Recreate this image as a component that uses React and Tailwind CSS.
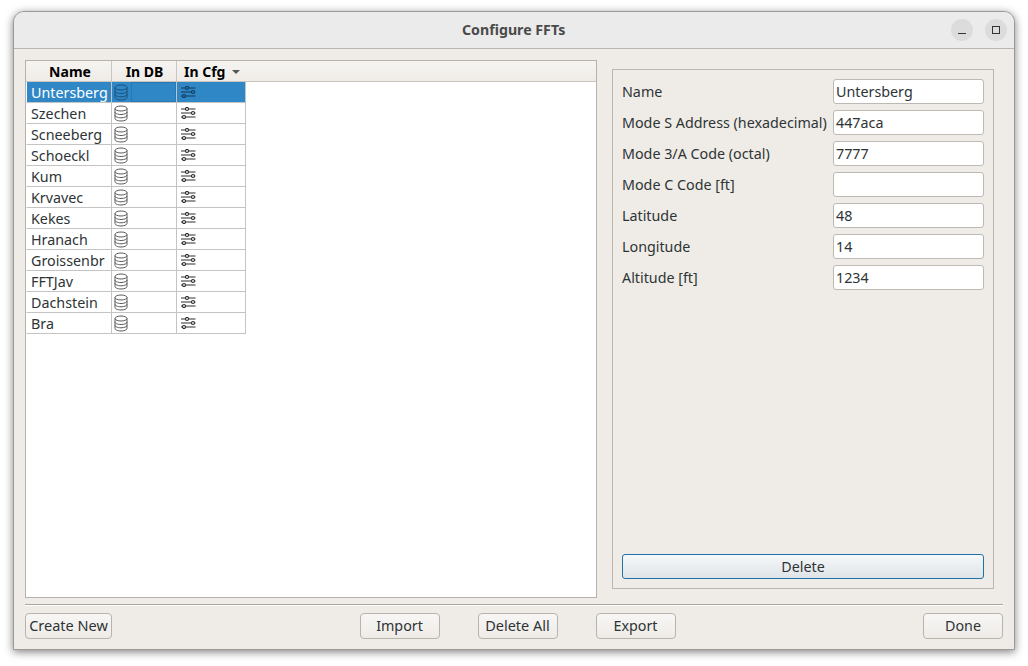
const rows = ["Untersberg", "Szechen", "Scneeberg", "Schoeckl", "Kum", "Krvavec", "Kekes", "Hranach", "Groissenbr", "FFTJav", "Dachstein", "Bra"];

const fields = [
  ["Name", "Untersberg"],
  ["Mode S Address (hexadecimal)", "447aca"],
  ["Mode 3/A Code (octal)", "7777"],
  ["Mode C Code [ft]", ""],
  ["Latitude", "48"],
  ["Longitude", "14"],
  ["Altitude [ft]", "1234"],
];

const DbIcon = ({ selected }) => (
  <svg width="14" height="17" viewBox="0 0 14 17" fill="none" stroke={selected ? "#1d4f78" : "#5a5a5a"} strokeWidth="1">
    <ellipse cx="7" cy="3.5" rx="6" ry="2.5" />
    <path d="M1 3.5v10c0 1.4 2.7 2.5 6 2.5s6-1.1 6-2.5v-10" />
    <path d="M1 7c0 1.4 2.7 2.5 6 2.5s6-1.1 6-2.5" />
    <path d="M1 10.3c0 1.4 2.7 2.5 6 2.5s6-1.1 6-2.5" />
  </svg>
);

const CfgIcon = ({ selected }) => (
  <svg width="16" height="12" viewBox="0 0 16 12" fill="none" stroke={selected ? "#123a5c" : "#2e2e2e"} strokeWidth="1.2">
    <path d="M1 2h4.5M8.5 2h7M1 6h10.5M14.5 6h1M1 10h1.5M5.5 10h10" />
    <circle cx="7" cy="2" r="1.5" />
    <circle cx="13" cy="6" r="1.5" />
    <circle cx="4" cy="10" r="1.5" />
  </svg>
);

const Btn = ({ className, children }) => (
  <button className={`h-[26px] rounded-[4px] border border-[#b7b3ad] bg-gradient-to-b from-[#f8f7f5] to-[#eeebe7] text-[#2e3436] ${className}`}>
    {children}
  </button>
);

export default function App() {
  return (
    <div className="h-[666px] w-[1028px] overflow-hidden bg-white pl-[13px] pt-[11px] font-['Noto_Sans','Open_Sans',sans-serif] text-[14.3px] text-[#2e3436]">
      <div className="flex h-[639px] w-[1002px] flex-col overflow-hidden rounded-t-[11px] border border-[#9d9a96] bg-[#efece7] shadow-[0_2px_9px_rgba(0,0,0,0.5)]">
        <div className="flex h-[37px] shrink-0 items-center border-b border-[#b9b6b1] bg-[#ebebeb] pl-[448px] pr-[7px]">
          <span className="flex-1 text-[14.2px] font-bold text-[#4a4a4a]">Configure FFTs</span>
          <div className="flex gap-[12px]">
            <div className="flex h-[22px] w-[22px] items-center justify-center rounded-full bg-[#dcdcdc]">
              <div className="mt-[6px] h-px w-[8px] bg-[#333]" />
            </div>
            <div className="flex h-[22px] w-[22px] items-center justify-center rounded-full bg-[#dcdcdc]">
              <div className="h-[8px] w-[8px] border border-[#333]" />
            </div>
          </div>
        </div>

        <div className="flex flex-1 pl-[11px] pr-[10px] pt-[11px]">
          <div className="h-[538px] w-[572px] border border-[#b5b1ab] bg-white">
            <div className="flex h-[21px] border-b border-[#c9c6c1] bg-gradient-to-b from-[#f6f4f1] to-[#efece7] text-[14px] font-bold leading-[22px] text-black">
              <div className="w-[86px] border-r border-[#c9c6c1] pl-[3px] text-center">Name</div>
              <div className="w-[65px] border-r border-[#c9c6c1] pl-[1px] text-center">In DB</div>
              <div className="flex w-[69px] items-start pl-[7px]">
                In Cfg
                <span className="ml-[7px] mt-[9px] h-0 w-0 border-x-[4px] border-t-[4px] border-x-transparent border-t-[#555]" />
              </div>
            </div>
            {rows.map((name, i) => (
              <div key={name} className={`flex h-[21px] w-[220px] border-b border-l border-r border-b-[#c4c4c4] border-l-white border-r-[#c4c4c4] leading-[22px] ${i === 0 ? "text-white" : "text-[#2e3436]"}`}>
                <div className={`w-[85px] border-r border-[#c4c4c4] pl-[4px] ${i === 0 ? "bg-[#2f87c6]" : ""}`}>{name}</div>
                <div className={`flex w-[65px] items-center border-r border-[#c4c4c4] pl-[2px] ${i === 0 ? "bg-[#2f87c6]" : ""}`}>
                  <DbIcon selected={i === 0} />
                  {i === 0 && <div className="ml-[3px] h-full flex-1 border border-[#2a78b0]" />}
                </div>
                <div className={`flex flex-1 items-center pl-[3px] ${i === 0 ? "bg-[#2f87c6]" : ""}`}>
                  <CfgIcon selected={i === 0} />
                </div>
              </div>
            ))}
          </div>

          <div className="ml-[15px] mt-[9px] flex h-[520px] w-[382px] flex-col border border-[#b9b6b0] px-[9px] pb-[9px] pt-[9px]">
            <div className="flex flex-col gap-[6px]">
              {fields.map(([label, value]) => (
                <div key={label} className="flex h-[25px] items-center justify-between">
                  <span className="whitespace-nowrap">{label}</span>
                  <div className="h-[25px] w-[151px] rounded-[3px] border border-[#bdb9b3] bg-white pl-[2px] leading-[23px]">{value}</div>
                </div>
              ))}
            </div>
            <button className="mt-auto h-[25px] w-full rounded-[3px] border border-[#1f72a8] bg-gradient-to-b from-[#f6f8f9] to-[#dfe4e8] text-[#2e3436]">
              Delete
            </button>
          </div>
        </div>

        <div className="mx-[11px] mb-[10px] shrink-0">
          <div className="border-t border-[#aaa7a2] shadow-[0_1px_0_#fff]" />
          <div className="mt-[8px] flex items-center">
            <Btn className="w-[87px] text-[14.5px]">Create New</Btn>
            <div className="flex-1" />
            <div className="flex gap-[38px]">
              <Btn className="w-[80px] text-[14.3px]">Import</Btn>
              <Btn className="w-[80px] text-[14.5px]">Delete All</Btn>
              <Btn className="w-[80px] text-[14.3px]">Export</Btn>
            </div>
            <div className="flex-1" />
            <Btn className="w-[80px] text-[14.3px]">Done</Btn>
          </div>
        </div>
      </div>
    </div>
  );
}
